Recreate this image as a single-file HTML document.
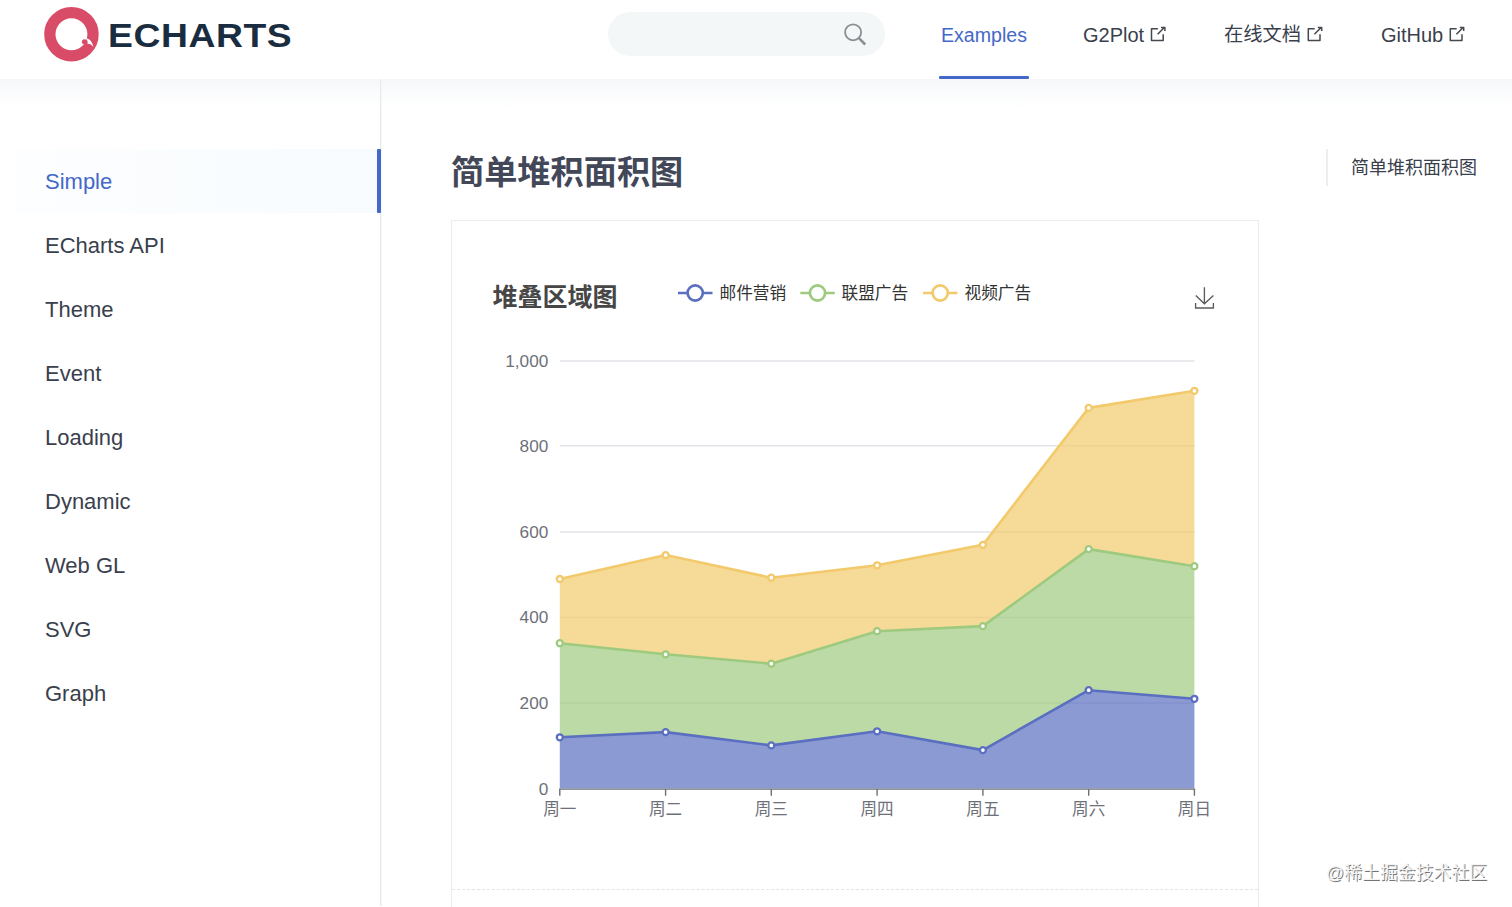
<!DOCTYPE html>
<html lang="zh-CN">
<head>
<meta charset="utf-8">
<title>ECharts Examples - 简单堆积面积图</title>
<style>
*{box-sizing:border-box;margin:0;padding:0}
html,body{width:1512px;height:907px;overflow:hidden;background:#fff}
body{position:relative;font-family:"Liberation Sans","Noto Sans CJK SC",sans-serif;color:#3a3f4d;-webkit-font-smoothing:antialiased}
.abs{position:absolute;white-space:nowrap}
#header{position:absolute;left:0;top:0;width:1512px;height:79px;background:#fff;z-index:5;}
#undershadow{position:absolute;left:0;top:79px;width:1512px;height:30px;background:linear-gradient(#f5f7fa,#fafbfc 40%,#fff)}
#logo-text{left:108px;top:14px;font-size:33px;font-weight:bold;color:#1a2d40;letter-spacing:0.5px;line-height:44px;transform-origin:left center;transform:scaleX(1.13)}
#search{left:608px;top:12px;width:277px;height:44px;border-radius:22px;background:#f4f7f8}
.nav{font-size:20px;line-height:24px;top:23px;color:#3a3f4d}
.nav.active{color:#4468c8}
#nav-underline{left:939px;top:76px;width:90px;height:3px;background:#4468c8;border-radius:1px}
#sidebar-border{left:380px;top:79px;width:2px;height:827px;background:linear-gradient(90deg,#e7e9ec 50%,#f6f7f9 50%)}
#side-active{left:16px;top:149px;width:365px;height:64px;background:linear-gradient(90deg,#fcfeff,#f8fbfe)}
#side-bar{left:377px;top:149px;width:4px;height:64px;background:#4468c8;border-radius:1px}
.side{left:45px;font-size:22px;line-height:26px;margin-top:1px;color:#3a3f4d}
.side.active{color:#4468c8}
#title{left:451px;top:149px;font-size:33.2px;line-height:48px;font-weight:bold;color:#434859}
#card{left:451px;top:220px;width:808px;height:700px;border:1px solid #ececec;background:#fff}
#dash{left:452px;top:889px;width:806px;height:0;border-top:1px dashed #e4e4e4}
#toc-line{left:1326px;top:149px;width:2px;height:37px;background:#eceef2}
#toc{left:1351px;top:155px;font-size:18px;line-height:26px;color:#3a3f4d}
#wm{left:1326px;top:861px;letter-spacing:.2px;font-size:17.7px;line-height:24px;color:#f4f4f4;text-shadow:1px 1px 0.5px rgba(70,70,70,.75)}
svg{position:absolute;left:0;top:0;overflow:visible}
svg text{font-family:"Liberation Sans","Noto Sans CJK SC",sans-serif}
</style>
</head>
<body>
<div id="undershadow"></div>
<div id="header">
  <svg width="110" height="80" viewBox="0 0 110 80">
    <circle cx="71.45" cy="34.3" r="21.6" fill="none" stroke="#d94c68" stroke-width="11.3"/>
    <circle cx="84.4" cy="41.8" r="2.5" fill="#d94c68"/>
    <path d="M85.6 38.2C89.5 38.3 92.8 42 93.3 47.2C91.6 44.6 89.6 43.6 87.4 43.9C88.1 41.8 87.5 39.8 85.6 38.2Z" fill="#fff"/>
  </svg>
  <div id="logo-text" class="abs">ECHARTS</div>
  <div id="search" class="abs"></div>
  <svg width="1512" height="80" viewBox="0 0 1512 80">
    <g fill="none" stroke="#8b8e93">
      <circle cx="853.1" cy="32.3" r="8" stroke-width="1.8"/>
      <path d="M858.9 38.2L865.2 44.5" stroke-width="2.6"/>
    </g>
    <g id="ext" fill="none" stroke="#46484f" stroke-width="1.5" stroke-linejoin="round">
      <path d="M1157.9 28.7H1151.5V40.6H1163.2V34.2"/>
      <path d="M1157.6 34.3L1164.6 27.3M1161 27.4H1164.9V31"/>
    </g>
    <use href="#ext" x="156.8"/>
    <use href="#ext" x="298.8"/>
  </svg>
  <div class="abs nav active" style="left:941px;font-size:19.6px">Examples</div>
  <div class="abs nav" style="left:1083px">G2Plot</div>
  <div class="abs nav" style="left:1224px;font-size:19.3px">在线文档</div>
  <div class="abs nav" style="left:1381px">GitHub</div>
  <div id="nav-underline" class="abs"></div>
</div>

<div id="sidebar-border" class="abs"></div>
<div id="side-active" class="abs"></div>
<div id="side-bar" class="abs"></div>
<div class="abs side active" style="top:168px">Simple</div>
<div class="abs side" style="top:232px">ECharts API</div>
<div class="abs side" style="top:296px">Theme</div>
<div class="abs side" style="top:360px">Event</div>
<div class="abs side" style="top:424px">Loading</div>
<div class="abs side" style="top:488px">Dynamic</div>
<div class="abs side" style="top:552px">Web GL</div>
<div class="abs side" style="top:616px">SVG</div>
<div class="abs side" style="top:680px">Graph</div>

<div id="title" class="abs">简单堆积面积图</div>
<div id="card" class="abs"></div>
<div id="dash" class="abs"></div>
<div id="toc-line" class="abs"></div>
<div id="toc" class="abs">简单堆积面积图</div>

<svg id="chart" width="1512" height="907" viewBox="0 0 1512 907">
  <g stroke="#e3e4e9" stroke-width="1.5"><path d="M559.8 360.9H1194.4M559.8 445.8H1194.4M559.8 532H1194.4M559.8 617.5H1194.4M559.8 703.1H1194.4"/></g>
  <path d="M559.8 737.3 L665.6 732.1 L771.3 745.4 L877.1 731.3 L982.9 750.1 L1088.7 690.2 L1194.4 698.8 L1194.4 788.6 L1088.7 788.6 L982.9 788.6 L877.1 788.6 L771.3 788.6 L665.6 788.6 L559.8 788.6Z" fill="#5a6fc0" fill-opacity=".7"/>
  <path d="M559.8 643.2 L665.6 654.3 L771.3 663.7 L877.1 631.2 L982.9 626.1 L1088.7 549.1 L1194.4 566.2 L1194.4 698.8 L1088.7 690.2 L982.9 750.1 L877.1 731.3 L771.3 745.4 L665.6 732.1 L559.8 737.3Z" fill="#9eca7f" fill-opacity=".7"/>
  <path d="M559.8 579.0 L665.6 555.1 L771.3 577.7 L877.1 565.3 L982.9 544.8 L1088.7 407.9 L1194.4 390.8 L1194.4 566.2 L1088.7 549.1 L982.9 626.1 L877.1 631.2 L771.3 663.7 L665.6 654.3 L559.8 643.2Z" fill="#f2ca6b" fill-opacity=".7"/>
  <path d="M559.8 737.3 L665.6 732.1 L771.3 745.4 L877.1 731.3 L982.9 750.1 L1088.7 690.2 L1194.4 698.8" fill="none" stroke="#5a6fc0" stroke-width="2.6" stroke-linejoin="bevel"/>
  <path d="M559.8 643.2 L665.6 654.3 L771.3 663.7 L877.1 631.2 L982.9 626.1 L1088.7 549.1 L1194.4 566.2" fill="none" stroke="#9eca7f" stroke-width="2.6" stroke-linejoin="bevel"/>
  <path d="M559.8 579.0 L665.6 555.1 L771.3 577.7 L877.1 565.3 L982.9 544.8 L1088.7 407.9 L1194.4 390.8" fill="none" stroke="#f2ca6b" stroke-width="2.6" stroke-linejoin="bevel"/>
  <g fill="#fff" stroke="#5a6fc0" stroke-width="2.3"><circle cx="559.8" cy="737.3" r="3"/><circle cx="665.6" cy="732.1" r="3"/><circle cx="771.3" cy="745.4" r="3"/><circle cx="877.1" cy="731.3" r="3"/><circle cx="982.9" cy="750.1" r="3"/><circle cx="1088.7" cy="690.2" r="3"/><circle cx="1194.4" cy="698.8" r="3"/></g>
  <g fill="#fff" stroke="#9eca7f" stroke-width="2.3"><circle cx="559.8" cy="643.2" r="3"/><circle cx="665.6" cy="654.3" r="3"/><circle cx="771.3" cy="663.7" r="3"/><circle cx="877.1" cy="631.2" r="3"/><circle cx="982.9" cy="626.1" r="3"/><circle cx="1088.7" cy="549.1" r="3"/><circle cx="1194.4" cy="566.2" r="3"/></g>
  <g fill="#fff" stroke="#f2ca6b" stroke-width="2.3"><circle cx="559.8" cy="579.0" r="3"/><circle cx="665.6" cy="555.1" r="3"/><circle cx="771.3" cy="577.7" r="3"/><circle cx="877.1" cy="565.3" r="3"/><circle cx="982.9" cy="544.8" r="3"/><circle cx="1088.7" cy="407.9" r="3"/><circle cx="1194.4" cy="390.8" r="3"/></g>
  <g stroke="#6e7079" stroke-width="1.4" fill="none"><path d="M559.1 789.1H1195.1"/><path d="M559.8 789V795.8M665.6 789V795.8M771.3 789V795.8M877.1 789V795.8M982.9 789V795.8M1088.7 789V795.8M1194.4 789V795.8"/></g>
  <g font-size="17.2" fill="#6e7079" text-anchor="end"><text x="548.3" y="794.9">0</text><text x="548.3" y="709.0">200</text><text x="548.3" y="623.4">400</text><text x="548.3" y="537.9">600</text><text x="548.3" y="451.7">800</text><text x="548.3" y="366.8">1,000</text></g>
  <g font-size="16.6" fill="#6e7079" text-anchor="middle"><text x="559.8" y="815">周一</text><text x="665.6" y="815">周二</text><text x="771.3" y="815">周三</text><text x="877.1" y="815">周四</text><text x="982.9" y="815">周五</text><text x="1088.7" y="815">周六</text><text x="1194.4" y="815">周日</text></g>
  <text x="492.5" y="306" font-size="25" font-weight="bold" fill="#464646">堆叠区域图</text>
  <g stroke="#5a6fc0" stroke-width="2.7" fill="#fff"><path d="M678 293H712.5"/><circle cx="695.2" cy="293" r="7.6"/></g>
  <text x="719.5" y="299.3" font-size="16.7" fill="#333">邮件营销</text>
  <g stroke="#9eca7f" stroke-width="2.7" fill="#fff"><path d="M800.3 293H834.8"/><circle cx="817.5" cy="293" r="7.6"/></g>
  <text x="841.5" y="299.3" font-size="16.7" fill="#333">联盟广告</text>
  <g stroke="#f2ca6b" stroke-width="2.7" fill="#fff"><path d="M923 293H957.5"/><circle cx="940.2" cy="293" r="7.6"/></g>
  <text x="964.5" y="299.3" font-size="16.7" fill="#333">视频广告</text>
  <g stroke="#5c5c5c" stroke-width="1.35" fill="none"><path d="M1204.4 287.2V303.6M1195.8 295.4L1204.4 303.8L1213.4 295.4M1195.6 303V308H1213.4V303"/></g>
</svg>

<div id="wm" class="abs">@稀土掘金技术社区</div>
</body>
</html>
